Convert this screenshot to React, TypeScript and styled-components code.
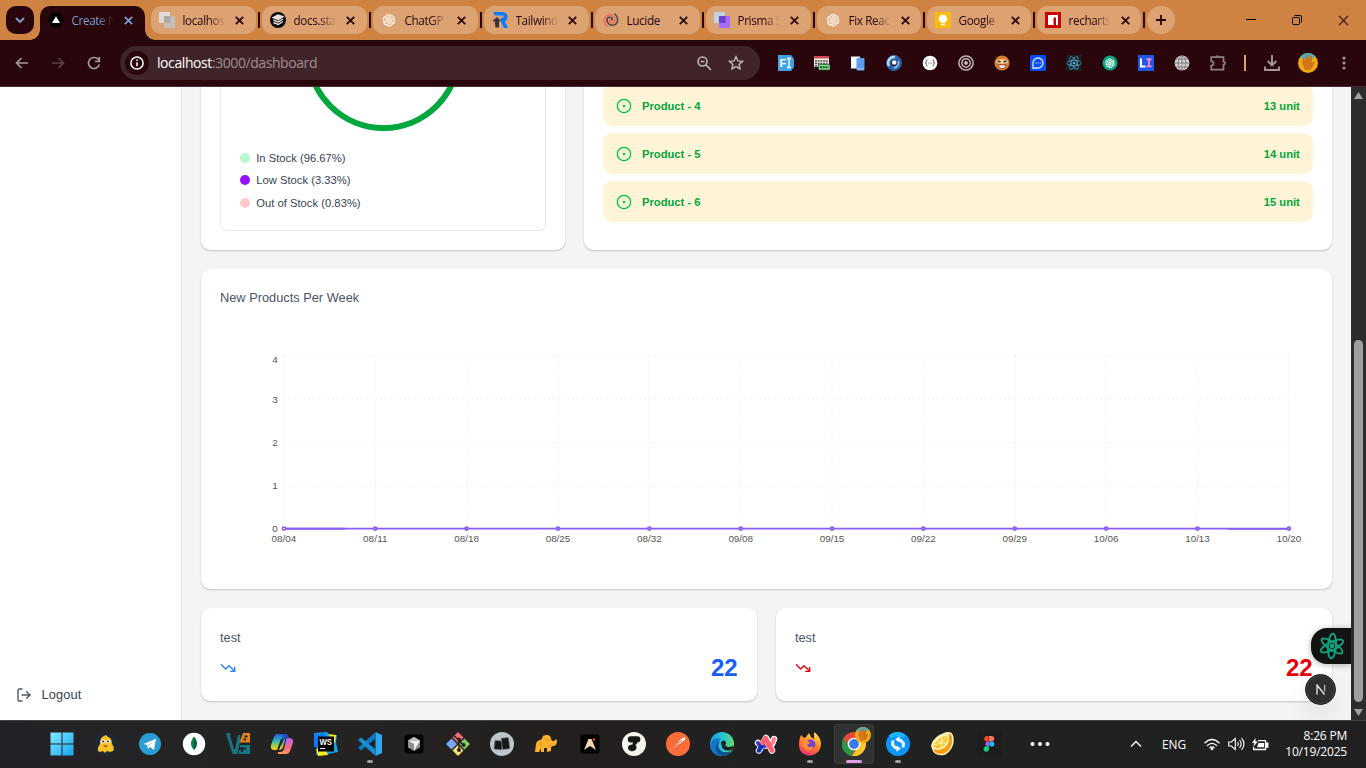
import React from 'react';
import styled, { createGlobalStyle, css } from 'styled-components';
import { CircleDot, LogOut, TrendingDown } from 'lucide-react';
import { AiOutlineOpenAI } from 'react-icons/ai';
import { FaReact } from 'react-icons/fa';

const GlobalStyle = createGlobalStyle`
  * { box-sizing: border-box; }
  body { margin: 0; overflow: hidden; }
  svg { display: block; flex: none; }
`;

const uiFont = `'Open Sans', 'Noto Sans', sans-serif`;

const Screen = styled.div`
  width: 1366px;
  height: 768px;
  display: flex;
  flex-direction: column;
  overflow: hidden;
  font-family: 'Liberation Sans', Arial, sans-serif;
`;

/* ---------- browser tabs ---------- */

const TabStrip = styled.div`
  height: 40px;
  flex: none;
  display: flex;
  padding: 6px 0 0 6px;
  background: #cf8343;
  font-family: ${uiFont};
  color: #28060b;
`;

const TabSearch = styled.div`
  width: 28px;
  height: 28px;
  margin-right: 6px;
  border-radius: 10px;
  background: #28060b;
  display: grid;
  place-items: center;
`;

const Tab = styled.div<{ $active?: boolean; $width: number }>`
  position: relative;
  width: ${(p) => p.$width}px;
  height: ${(p) => (p.$active ? 34 : 28)}px;
  padding: 0 11px 0 8px;
  display: flex;
  align-items: ${(p) => (p.$active ? 'flex-start' : 'center')};
  border-radius: ${(p) => (p.$active ? '10px 10px 0 0' : '10px')};
  background: ${(p) => (p.$active ? '#28060b' : '#dca272')};
  color: ${(p) => (p.$active ? '#7c9fd0' : '#28060b')};
  ${(p) =>
    p.$active &&
    css`
      padding-top: 6px;
      margin-right: 6px;
      &::before, &::after {
        content: '';
        position: absolute;
        bottom: 0;
        width: 10px;
        height: 10px;
      }
      &::before {
        left: -10px;
        background: radial-gradient(circle at 0 0, transparent 9.5px, #28060b 10px);
      }
      &::after {
        right: -10px;
        background: radial-gradient(circle at 100% 0, transparent 9.5px, #28060b 10px);
      }
    `}
`;

const TabTitle = styled.span<{ $fade: boolean }>`
  width: 46px;
  margin: 0 6px 0 7.500px;
  overflow: hidden;
  white-space: nowrap;
  font-size: 11.700px;
  line-height: 16px;
  letter-spacing: -0.350px;
  ${(p) => p.$fade && css`mask-image: linear-gradient(90deg, #000 26px, transparent 42px);`}
`;

const TabDivider = styled.div`
  width: 2px;
  height: 16px;
  margin: 6px 2px 0;
  background: #28060b;
`;

const NewTab = styled.div`
  width: 28px;
  height: 28px;
  border-radius: 14px;
  background: #dca272;
  display: grid;
  place-items: center;
`;

const WindowButtons = styled.div`
  margin-left: auto;
  display: flex;
  height: 28px;
  & > div { width: 46px; display: grid; place-items: center; }
`;

const CloseGlyph = ({ size = 9, width = 1.8 }: { size?: number; width?: number }) => (
  <svg width={size} height={size} viewBox="0 0 9 9" fill="none" stroke="currentColor" strokeWidth={width}>
    <path d="M.8.8l7.4 7.4M8.2.8L.8 8.2" />
  </svg>
);

const TriangleFavicon = () => (
  <svg width="16" height="16"><circle cx="8" cy="8" r="7.6" fill="#000" /><path d="M8 4.2l4 6.8H4z" fill="#fff" /></svg>
);
const SquaresFavicon = ({ back, front, mid }: { back: string; front: string; mid: string }) => (
  <svg width="16" height="16"><rect width="11" height="11" rx="1" fill={back} /><rect x="5" y="4" width="11" height="12" rx="1" fill={front} /><rect x="5" y="4" width="6.5" height="7" fill={mid} /></svg>
);
const LayersFavicon = () => (
  <svg width="16" height="16" fill="none" stroke="#e9e2dc" strokeWidth="1.4"><circle cx="8" cy="8" r="8" fill="#080808" stroke="none" /><path d="M3.2 5.7L8 3l5 1.7-4.7 2.8z" fill="#e9e2dc" /><path d="M3.4 8l4.9 1.9L13 7M3.4 10.5l4.9 2 4.6-3" /></svg>
);
const OpenAIFavicon = () => <AiOutlineOpenAI size={16} color="#fff5ea" stroke="#fff5ea" strokeWidth={18} />;
const RFavicon = () => (
  <svg width="16" height="16"><path d="M1 0h9.500q5 .3 5 5 0 3.300-2.700 4.300L16 16h-4.200L8.500 8.500V6h1.600q1.300-.1 1.300-1.300T10 3.500H3z" fill="#0a7bff" /><path d="M0 9.300L5 5l4 4.300H7v6.200H3.500l-.8-6.200z" fill="#393333" /></svg>
);
const LucideFavicon = () => (
  <svg width="16" height="16" viewBox="0 0 24 24" fill="none" strokeWidth="2.300" strokeLinecap="round"><path d="M14 12a4 4 0 0 0-8 0 8 8 0 1 0 16 0 11.970 11.970 0 0 0-4-8.944" stroke="#4a4344" /><path d="M10 12a4 4 0 0 0 8 0 8 8 0 1 0-16 0 11.970 11.970 0 0 0 4.063 9" stroke="#f56565" /></svg>
);
const KeepFavicon = () => (
  <svg width="16" height="16"><rect width="16" height="16" rx="1.500" fill="#fcbc05" /><circle cx="8" cy="6.800" r="4.100" fill="#fff" /><path d="M6 8h4v3H6zM6 11.800h4v1.400H6z" fill="#fff" /></svg>
);
const NpmFavicon = () => (
  <svg width="16" height="16"><path d="M0 0h16v16H0z" fill="#cb0000" /><path d="M3 3h10v10h-2V5.500H8.500V13H3z" fill="#fff" /></svg>
);

const tabs: { title: string; icon: React.ReactNode; width: number; fade: boolean }[] = [
  { title: 'localhos', icon: <SquaresFavicon back="#dfdad5" front="#c4bebb" mid="#adaaa8" />, width: 105, fade: true },
  { title: 'docs.sta', icon: <LayersFavicon />, width: 105, fade: true },
  { title: 'ChatGP', icon: <OpenAIFavicon />, width: 105, fade: true },
  { title: 'Tailwind', icon: <RFavicon />, width: 105, fade: true },
  { title: 'Lucide', icon: <LucideFavicon />, width: 105, fade: false },
  { title: 'Prisma S', icon: <SquaresFavicon back="#c2d3df" front="#a66cf2" mid="#6d3fce" />, width: 105, fade: true },
  { title: 'Fix Reac', icon: <OpenAIFavicon />, width: 104, fade: true },
  { title: 'Google', icon: <KeepFavicon />, width: 104, fade: true },
  { title: 'recharts', icon: <NpmFavicon />, width: 104, fade: true },
];

/* ---------- browser toolbar ---------- */

const Toolbar = styled.div`
  height: 47px;
  flex: none;
  display: flex;
  align-items: center;
  padding: 0 4px;
  background: #28060b;
  border-bottom: 1px solid #4a2a2e;
  color: #a7999a;
`;

const ToolCell = styled.div<{ $width?: number; $dim?: boolean }>`
  width: ${(p) => p.$width ?? 36}px;
  height: 34px;
  display: grid;
  place-items: center;
  opacity: ${(p) => (p.$dim ? 0.4 : 1)};
`;

const AddressBar = styled.div`
  width: 640px;
  height: 34px;
  margin: 0 8px;
  padding: 0 8px 0 5px;
  display: flex;
  align-items: center;
  border-radius: 17px;
  background: #3f2529;
  color: #c2b8b9;
`;

const SiteInfo = styled.div`
  width: 24px;
  height: 24px;
  border-radius: 12px;
  background: #28060b;
  color: #fff;
  display: grid;
  place-items: center;
`;

const Url = styled.div`
  flex: 1;
  margin-left: 8px;
  font: 14px/20px ${uiFont};
  letter-spacing: -0.420px;
  color: #a08f91;
  & > b { font-weight: 400; color: #fff; }
`;

const ToolSeparator = styled.div`
  width: 2px;
  height: 16px;
  background: #dca272;
`;

const extensionIcons: React.ReactNode[] = [
  <svg width="16" height="16"><path d="M0 0h13l3 4v8l-3 4H0z" fill="#41a3e3" /><text x="1.500" y="12" fontSize="11" fontWeight="700" fontFamily="Liberation Sans" fill="#fff">F</text><path d="M9 3.500h4M11 3.500v9M9 12.500h4" stroke="#fff" strokeWidth="1.300" /></svg>,
  <svg width="16" height="16"><path d="M0 1h15v11H0z" fill="#f1eeec" /><path d="M0 1h15v2.500H0z" fill="#ce4858" /><path d="M1 6h13M1 8.500h13M1 11h5" stroke="#55494a" strokeDasharray="2 .7" strokeWidth="1.500" /><path d="M4.500 9.500H16V15H4.500z" fill="#8be394" stroke="#174a26" strokeWidth=".7" /><path d="M6 12.200h8.500" stroke="#174a26" strokeDasharray="2 .7" strokeWidth="2" /></svg>,
  <svg width="16" height="16"><path d="M1 1.500h9v12H1z" fill="#f5f7fa" /><rect x="6.500" y="3" width="8" height="12.500" rx="1" fill="#5c9df0" /><path d="M7 14h7" stroke="#a8cbff" /></svg>,
  <svg width="16" height="16" fill="none"><circle cx="8" cy="8" r="5.400" stroke="#2865ac" strokeWidth="5" /><path d="M3 11A6 6 0 0 1 9 2" stroke="#b7d8ef" strokeWidth="2.500" /><path d="M12.500 6A6 6 0 0 1 8 13" stroke="#76b3df" strokeWidth="2" /><circle cx="8.200" cy="7.500" r="2.300" fill="#f3f7fb" /></svg>,
  <svg width="16" height="16"><circle cx="8" cy="8" r="7.300" fill="#fff" /><path d="M5.500 5q-1.500 0-1.200 1.500T3.300 8q1.200.2 1 1.500T5.500 11M10.500 5q1.500 0 1.200 1.500t1 1.500q-1.200.2-1 1.500t-1.200 1.500" fill="none" stroke="#555" /><path d="M6.200 8h3.800" stroke="#777" strokeWidth="1.200" strokeDasharray=".9 .5" /></svg>,
  <svg width="16" height="16" fill="none" stroke="#c5babb" strokeWidth="1.500"><circle cx="8" cy="8" r="7.100" /><circle cx="8" cy="8" r="4.200" /><circle cx="8" cy="8" r="1.200" fill="#c5babb" /></svg>,
  <svg width="16" height="16"><circle cx="8" cy="8" r="7.600" fill="#d27c32" /><path d="M2 6q6-4 12 0v2q-6 1.500-12 0z" fill="#f2d3a2" /><path d="M3.500 6.500h3M9.500 6.500h3" stroke="#4b210c" strokeWidth="1.700" /><path d="M4 10h8q-1 3.500-4 3.500T4 10z" fill="#fff" stroke="#6d290e" strokeWidth=".7" /></svg>,
  <svg width="16" height="16" fill="none"><rect width="16" height="16" rx="1.500" fill="#0a4ef0" /><path d="M3 13.200V8a5 5 0 1 1 5 5z" stroke="#dbe8ff" strokeWidth="1.300" /><path d="M5.300 8h6" stroke="#dbe8ff" strokeWidth="1.200" strokeDasharray="1.200 1" /></svg>,
  <svg width="16" height="16"><path d="M0 0h16v16H0z" fill="#1c1c22" /><FaReact x="0.500" y="0.500" size={15} color="#51b8e0" /></svg>,
  <svg width="16" height="16"><circle cx="8" cy="8" r="7.500" fill="#10a37f" /><AiOutlineOpenAI x="2" y="2" size={12} color="#fff" stroke="#fff" strokeWidth={20} /></svg>,
  <svg width="16" height="16"><path d="M0 0h16v16H0z" fill="#2158e8" /><path d="M3 3.500v8h4.500" fill="none" stroke="#fff" strokeWidth="2" /><path d="M8.500 4.200h5M8.500 11.400h5M11 4v8" stroke="#ef86cf" strokeWidth="1.900" /></svg>,
  <svg width="16" height="16" fill="none" stroke="#6f6869" strokeWidth=".8"><circle cx="8" cy="8" r="7.400" fill="#d6d2d2" stroke="none" /><path d="M8 .5v15M.5 8h15M2 4h12M2 12h12" /><ellipse cx="8" cy="8" rx="3.800" ry="7.300" /></svg>,
  <svg width="18" height="18" fill="none" stroke="#8d8183" strokeWidth="1.700"><path d="M2.200 3.200h12.300v4.500q1.700.3 1.700 1.500t-1.700 1.500v5H2.200v-4q2.300-.3 2.300-2.200T2.200 7.200z" /><path d="M6.500 2.800q.3-1.600 1.900-1.600t1.900 1.600" fill="#8d8183" stroke="none" /></svg>,
];

const HandAvatar = ({ size = 20 }: { size?: number }) => (
  <svg width={size} height={size} viewBox="0 0 20 20"><circle cx="10" cy="10" r="10" fill="#f2a80f" /><path d="M2.200 4Q9-3.500 17 3L14 6H5z" fill="#3fb5cf" /><path d="M4.500 11V6l1.500-.5L7.200 9V2.500h1.500L9.500 7V1.500h1.700V7l1.300-4.500 1.300.4V10l2.200-1.500.8.800-2.300 5-2.500 2.500H7z" fill="#cf7219" /><path d="M8 9v6M11 8v7" stroke="#e58c28" strokeWidth=".7" /></svg>
);

/* ---------- page ---------- */

const Page = styled.div`
  height: 633px;
  flex: none;
  display: flex;
`;

const Sidebar = styled.aside`
  width: 182px;
  display: flex;
  flex-direction: column;
  justify-content: flex-end;
  padding: 0 16px 16px;
  background: #fff;
  border-right: 1px solid #e5e7eb;
`;

const LogoutLink = styled.div`
  display: flex;
  align-items: center;
  gap: 9.600px;
  height: 19px;
  font-size: 12.800px;
  color: #364153;
  letter-spacing: 0.1px;
  & svg { color: #4a5565; }
`;

const Main = styled.main`
  position: relative;
  width: 1169px;
  padding: 0 19.200px 19.200px;
  display: flex;
  flex-direction: column;
  justify-content: flex-end;
  gap: 19.200px;
  overflow: hidden;
  background: #f3f4f6;
`;

const CardGrid = styled.div<{ $columns: string }>`
  display: grid;
  flex: none;
  grid-template-columns: ${(p) => p.$columns};
  gap: 19.200px;
`;

const Card = styled.section<{ $height: number }>`
  height: ${(p) => p.$height}px;
  flex: none;
  padding: 19.200px 19.200px 18.800px 18.800px;
  display: flex;
  flex-direction: column;
  border-radius: 9.600px;
  background: #fff;
  box-shadow: 0 1px 2.400px rgba(0, 0, 0, 0.1), 0 1px 1.600px -0.800px rgba(0, 0, 0, 0.1);
`;

const StatCard = styled(Card)`
  padding-top: 20px;
`;

const CardTitle = styled.h3`
  margin: 0;
  font-size: 12.800px;
  line-height: 19.200px;
  font-weight: 400;
  color: #4a5565;
`;

const StockPanel = styled.div`
  flex: 1;
  display: flex;
  flex-direction: column;
  align-items: center;
  justify-content: flex-end;
  padding: 19px;
  border: 1px solid #e5e7eb;
  border-radius: 6.400px;
`;

const Legend = styled.ul`
  align-self: stretch;
  list-style: none;
  margin: 19px 0 0;
  padding: 0;
  display: flex;
  flex-direction: column;
  gap: 6.400px;
`;

const LegendItem = styled.li<{ $color: string }>`
  display: flex;
  align-items: center;
  gap: 6.200px;
  height: 16px;
  font-size: 11.200px;
  letter-spacing: 0.030px;
  color: #364153;
  &::before {
    content: '';
    width: 10px;
    height: 10px;
    border-radius: 5px;
    background: ${(p) => p.$color};
  }
`;

const ProductList = styled(Card)`
  justify-content: flex-end;
  gap: 7px;
  padding-bottom: 27.500px;
`;

const ProductRow = styled.div`
  height: 41px;
  flex: none;
  display: flex;
  align-items: center;
  gap: 9.600px;
  padding: 0 12.800px 0 13.200px;
  border-radius: 9.600px;
  background: #fff4d6;
  color: #00a63e;
  font-size: 11.200px;
  font-weight: 700;
  & > span:last-child { margin-left: auto; }
`;

const StatLine = styled.div<{ $color: string }>`
  display: flex;
  align-items: center;
  justify-content: space-between;
  flex: none;
  height: 41px;
  font-size: 24px;
  font-weight: 700;
  color: ${(p) => p.$color};
`;

const AssistantTab = styled.div`
  position: absolute;
  right: 0;
  top: 541px;
  width: 40px;
  height: 36px;
  padding-left: 2px;
  display: grid;
  place-items: center;
  border-radius: 16px 0 0 16px;
  background: #131313;
  box-shadow: 0 1px 6px rgba(0, 0, 0, 0.3);
`;

const DevBadge = styled.div`
  position: absolute;
  right: 15px;
  top: 587px;
  width: 31px;
  height: 31px;
  display: grid;
  place-items: center;
  border-radius: 50%;
  background: #2f2f2f;
  border: 1px solid #171717;
  box-shadow: inset 0 0 0 1px #484848, 0 13px 26px rgba(0, 0, 0, 0.08);
`;

const Scrollbar = styled.div`
  width: 15px;
  display: flex;
  flex-direction: column;
  justify-content: space-between;
  align-items: center;
  padding: 5px 0 4px;
  background: #2c2c2c;
`;

const ScrollThumb = styled.div`
  width: 9px;
  height: 362px;
  margin: auto 0 7px;
  border-radius: 4.500px;
  background: #9f9f9f;
`;

const weeks = ['08/04', '08/11', '08/18', '08/25', '08/32', '09/08', '09/15', '09/22', '09/29', '10/06', '10/13', '10/20'];

const WeekChart = () => {
  const left = 63.900;
  const step = 91.360;
  const top = 28.800;
  const rowStep = 43.200;
  const bottom = top + 4 * rowStep;
  const right = left + 11 * step;
  return (
    <svg width="1093" height="240" fontFamily="Liberation Sans, Arial, sans-serif" fontSize="9.900" fill="#555">
      <g stroke="#f2f2f2" strokeDasharray="2.400 2.400">
        {[0, 1, 2, 3, 4].map((i) => <path key={i} d={`M${left} ${top + i * rowStep}H${right}`} />)}
        {weeks.map((w, i) => <path key={w} d={`M${left + i * step} ${top}V${bottom}`} />)}
      </g>
      {[4, 3, 2, 1, 0].map((n, i) => (
        <text key={n} x="57.800" y={(i === 0 ? top + 3.500 : top + i * rowStep) + 3.800} textAnchor="end">{n}</text>
      ))}
      {weeks.map((w, i) => (
        <text key={w} x={left + i * step} y="214.600" textAnchor="middle" textLength="24.600">{w}</text>
      ))}
      <path d={`M${left} ${bottom + 0.200}h61M${right - 61} ${bottom + 0.300}h61`} stroke="#8b5cf6" strokeWidth="1.900" />
      <path d={`M${left} ${bottom}H${right}`} stroke="#8b5cf6" strokeWidth="1.600" />
      {weeks.map((w, i) => (
        <circle key={w} cx={left + i * step} cy={bottom} r="1.600" fill={i === 0 ? '#fff' : '#a98bf8'} stroke="#8b5cf6" strokeWidth="1.600" />
      ))}
    </svg>
  );
};

/* ---------- taskbar ---------- */

const Taskbar = styled.footer`
  height: 48px;
  flex: none;
  display: flex;
  align-items: center;
  padding: 0 0 1px 39.500px;
  border-top: 1px solid #424143;
  background: linear-gradient(90deg, #242126 0%, #242425 12%, #241f1f 45%, #202222 55%, #202020 100%);
  color: #fff;
  font-family: ${uiFont};
`;

const TaskItem = styled.div<{ $active?: boolean; $running?: boolean }>`
  position: relative;
  width: 40px;
  height: 40px;
  margin: 0 2px;
  display: grid;
  place-items: center;
  border-radius: 4px;
  background: ${(p) => (p.$active ? '#303131' : 'transparent')};
  ${(p) => p.$active && css`box-shadow: inset 0 0 0 1px #3a3a3a;`}
  &::after {
    content: '';
    display: ${(p) => (p.$active || p.$running ? 'block' : 'none')};
    position: absolute;
    bottom: 1px;
    width: ${(p) => (p.$active ? 16 : 6)}px;
    height: 3px;
    border-radius: 2px;
    background: ${(p) => (p.$active ? '#dda0e5' : '#9b9b9b')};
  }
`;

const ProfileBadge = styled.div`
  position: absolute;
  right: 3px;
  top: 3px;
`;

const TrayItem = styled.div<{ $width: number }>`
  width: ${(p) => p.$width}px;
  display: grid;
  place-items: center;
  font-size: 11.900px;
  letter-spacing: -0.1px;
`;

const Spacer = styled.div<{ $width?: number }>`
  ${(p) => (p.$width ? `width: ${p.$width}px;` : 'flex: 1;')}
`;

const Clock = styled.div`
  width: 71px;
  text-align: right;
  font-size: 12px;
  line-height: 16px;
  letter-spacing: -0.200px;
`;

type Task = { icon: React.ReactNode; state?: 'active' | 'running' };

const tasks: Task[] = [
  { icon: <svg width="24" height="24"><defs><linearGradient id="win" x2="1" y2="1"><stop stopColor="#80ebff" /><stop offset="1" stopColor="#17a5f5" /></linearGradient></defs><path d="M.5.500h11v11H.5zM12.500.5h11v11h-11zM.5 12.500h11v11H.5zM12.500 12.500h11v11h-11z" fill="url(#win)" /></svg> },
  { icon: <svg width="24" height="24"><circle cx="12" cy="12" r="11.500" fill="#1e2836" /><path d="M4 19q-1-3 2-7 0-7 4-8l2-1 2 2q4 1 4 7 3 4 1 7l-3 1-3-1-2 2-2-2-3 1z" fill="#f7c325" /><circle cx="8.800" cy="9.500" r="2.100" fill="#fff" /><circle cx="14" cy="9.500" r="2.100" fill="#fff" /><circle cx="9" cy="9.500" r="1" fill="#222" /><circle cx="14" cy="9.500" r="1" fill="#222" /><path d="M9 13.500h5q-2.500 3-5 0" fill="#a53926" /></svg> },
  { icon: <svg width="24" height="24"><circle cx="12" cy="12" r="11" fill="#2b9dd4" /><path d="M5.500 12L18 6.800 16 18l-4-3-2 2-.8-4z" fill="#fff" /><path d="M9.300 13.200L16 8.500 11 14" fill="#a9cde3" /></svg> },
  { icon: <svg width="24" height="24"><circle cx="12" cy="12" r="11.200" fill="#fff" /><path d="M12 4.500q-4 5-2.800 9 1 3 2.600 4.200L12 20z" fill="#13804d" /><path d="M12 4.500q4 5 2.800 9-1 3-2.600 4.200L12 20z" fill="#075f38" /></svg> },
  { icon: <svg width="24" height="24"><path d="M0 1h4l4.500 16L10 12l2-9h2.500L14 11l-1 3-1.500 8H6.500z" fill="#167580" /><path d="M4.500 4L8.500 17l1-5" fill="none" stroke="#242326" strokeWidth="1" /><path d="M14.500 8L17 1h7v9.500H13.500z" fill="#e48421" /><path d="M17.500 6.500h2.500v2h-2.500zM18.500 3.500h3v2h-3z" fill="#242326" /><path d="M14 13h10v9H13v-4h2v2h2v-2.500h3V15.500h-6z" fill="#167580" /></svg> },
  { icon: <svg width="24" height="24"><defs><linearGradient id="copA" x2="0" y2="1"><stop stopColor="#245dde" /><stop offset=".4" stopColor="#29b1c5" /><stop offset=".75" stopColor="#a8cf42" /><stop offset="1" stopColor="#f8c52a" /></linearGradient><linearGradient id="copB" x2="0" y2="1"><stop stopColor="#b763ed" /><stop offset=".6" stopColor="#f46a85" /><stop offset="1" stopColor="#ff9d50" /></linearGradient></defs><path d="M7 2h8q2 0 1 3l-3 10q-1 3-4 3H4q-4 0-3-5L4 5q1-3 3-3z" fill="url(#copA)" /><path d="M17 6h2q5 0 4 5l-3 8q-1 3-4 3H9q-2 0-1-2h3q2 0 3-3l2-9z" fill="url(#copB)" /><path d="M13 2h3q2 0 3 4h-2q-3 0-4 4l-2 5z" fill="#264cb9" /><path d="M11 7l2 0-4 11H7z" fill="#241f24" /></svg> },
  { icon: <svg width="24" height="24"><path d="M0 1l13-1 3 4 7-1-1 7 2 10-10 2-12 1 1-7z" fill="#10a5e9" /><path d="M14 2l8 1-1 8zM2 17l9-2 3 8-10 1z" fill="#f6ed21" /><path d="M0 2l12-1-7 15-5-1z" fill="#087cf7" /><path d="M4 4.500h16v15H4z" fill="#000" /><text x="5.500" y="12.500" fontFamily="Liberation Sans" fontWeight="700" fontSize="8.500" textLength="12.500" lengthAdjust="spacingAndGlyphs" fill="#fff">WS</text><path d="M6 16.500h5" stroke="#fff" /></svg> },
  { state: 'running', icon: <svg width="24" height="24"><path d="M17.500 0L24 3v18l-6.500 3z" fill="#2fa8ed" /><path d="M17.500 0v6.500L3 18.500 0 15.700z" fill="#087abf" /><path d="M17.500 24v-6.500L3 5.500.2 8z" fill="#168fd5" /></svg> },
  { icon: <svg width="24" height="24"><rect x="2.500" y="2.500" width="19" height="19" rx="3.500" fill="#000" /><path d="M12 5l6 3.500v7L12 19l-6-3.500v-7z" fill="#8e8e8e" /><path d="M6 8.500h12L12 19v-7z" fill="#efefef" /><path d="M12 5l6 3.500H6z" fill="#c2c2c2" /></svg> },
  { icon: <svg width="24" height="24"><path d="M12 0l5.500 5.500L12 11 6.500 5.500z" fill="#f06d79" /><path d="M5.500 6.500L11 12l-5.500 5.500L0 12z" fill="#79aafa" /><path d="M18.500 6.500L24 12l-5.500 5.500L13 12z" fill="#83ce5f" /><path d="M12 13l5.500 5.500L12 24l-5.500-5.500z" fill="#f5df74" /><path d="M7 3l6 5v10M13 8l4 5" fill="none" stroke="#2a2222" strokeWidth="1.500" /><g fill="#2a2222"><circle cx="13" cy="7.500" r="1.900" /><circle cx="13" cy="18" r="2" /><circle cx="17.500" cy="13" r="2" /></g></svg> },
  { icon: <svg width="24" height="24"><circle cx="12" cy="12" r="12" fill="#bcc6cc" /><g fill="#171717" stroke="#7d878c" strokeWidth=".8"><rect x="4.500" y="8.500" width="8" height="9" rx="1" transform="rotate(7 8 12)" /><rect x="11.800" y="5.800" width="7.500" height="11.500" rx="1" transform="rotate(-7 15 12)" /></g></svg> },
  { icon: <svg width="24" height="24"><path d="M1 20l1-8q1-4 5-4l2-4q4-2 7 0l2 5h2l2-2 1 2q0 5-4 5l-2 1v4l-4 1v-4h-3v4H7v-4l-2 4z" fill="#ffb32d" /><path d="M9 5q4 5 8 2M6 10l2 5M13 15l4-2" stroke="#e78b19" fill="none" /></svg> },
  { icon: <svg width="24" height="24"><rect x="2.500" y="2.500" width="19" height="19" rx="2" fill="#000" /><path d="M10.500 7h3l4.500 11-6-4-6 4z" fill="#f3d7ae" /><circle cx="16" cy="7.500" r="1.300" fill="#e4512b" /></svg> },
  { icon: <svg width="24" height="24"><circle cx="12" cy="12" r="12" fill="#f5f5ef" /><rect x="5.800" y="4.300" width="12.500" height="6.200" rx="3" fill="#171714" /><path d="M11 10h4.500q-.3 2-2 3 2 2.500.2 4.800-2 2-5 1.200-3.200-1.200-2.700-4 .7-2.300 4.500-2.600z" fill="#171714" /></svg> },
  { icon: <svg width="24" height="24"><circle cx="12" cy="12" r="12" fill="#ff6c37" /><path d="M5 19l10-12 4-2q1 3-2 4z" fill="#fff" /><path d="M6 18L16 8M9 17l6-5" stroke="#d65027" strokeWidth=".8" /></svg> },
  { icon: <svg width="24" height="24"><defs><linearGradient id="edge" x2="1"><stop stopColor="#199ce5" /><stop offset=".6" stopColor="#2bc7cb" /><stop offset="1" stopColor="#66dc62" /></linearGradient></defs><circle cx="12" cy="12" r="12" fill="url(#edge)" /><path d="M0 13Q3 5 11 7q-4 3-3 8 2 7 12 5-4 5-10 4-10-2-10-11z" fill="#1374c5" /><path d="M10 9q-5 7 3 11 4 1 8-1-3 5-8 5Q3 21 7 12z" fill="#0c4e8e" /><path d="M11 10q3-3 5 0 .5 2-1 3.500 2 2.500 8 .5l1 1-2 3q-8 2-10-3z" fill="#202222" /></svg> },
  { icon: <svg width="24" height="24" fill="none" strokeLinecap="round" strokeLinejoin="round"><path d="M5 18.500L12 6l6 12.500M4 11q6 5 14 1l2-5" stroke="#fff" strokeWidth="6.500" /><path d="M4 11q2 3.500 8 3.500 6.500-.5 8-7.500" stroke="#ff7f8e" strokeWidth="4" /><path d="M4 11q2 3.300 6 3.500" stroke="#3441db" strokeWidth="4" /><path d="M5 18.500l4-7.500" stroke="#0c2db5" strokeWidth="4.500" /><path d="M8.500 11l3-5 6.500 12.500" stroke="#ff606d" strokeWidth="4.800" /></svg> },
  { state: 'running', icon: <svg width="24" height="24"><defs><linearGradient id="fox" x1=".7" x2=".3" y2="1"><stop stopColor="#ffe14a" /><stop offset=".5" stopColor="#ff8429" /><stop offset="1" stopColor="#f52f73" /></linearGradient></defs><path d="M3 3l3 3 2-1 3-4 2 4 3 2V0q6 4 7 11 0 11-11 12.500Q1 23 1 12 1 7 3 3z" fill="url(#fox)" /><circle cx="12.500" cy="12.500" r="5" fill="#7746cf" /><path d="M5 8l5 1 2 2-3 2q2 4 7 1-3 7-8 4-5-3-3-10z" fill="#ff8f2d" /></svg> },
  { state: 'active', icon: <><svg width="24" height="24"><circle cx="12" cy="12" r="12" fill="#e7473b" /><path d="M1.600 6L7 15.500 12 18l-2 6A12 12 0 0 1 1.600 6z" fill="#279948" /><path d="M24 12a12 12 0 0 1-14 12l7-10V7h6q1 2 1 5z" fill="#fac72d" /><circle cx="12" cy="12" r="6.300" fill="#fff" /><circle cx="12" cy="12" r="4.900" fill="#367be8" /></svg><ProfileBadge><HandAvatar size={16} /></ProfileBadge></> },
  { state: 'running', icon: <svg width="24" height="24" fill="none"><circle cx="12" cy="12" r="12" fill="#0a95fa" /><path d="M4 5q7-6 14-.5" stroke="#19b7ff" strokeWidth="4" /><path d="M12 7.500l3 1 2.500 3-.5 4M12 16.500l-3-1-2.500-3 .5-4" stroke="#eaf7ff" strokeWidth="3" /><path d="M9 7.500L13.500 4v6.500zM15 16.500L10.500 20v-6.500z" fill="#eaf7ff" /></svg> },
  { icon: <svg width="26" height="26"><path d="M3 14Q5 6 17 2q7-2 7 7 0 9-8 14Q4 26 3 14z" fill="#f89c12" stroke="#fff1ba" strokeWidth="1.500" /><path d="M3 15Q7 6 19 3q2 12-8 15-5 1-8-3z" fill="#ffc72e" stroke="#fff7cd" strokeWidth="1.300" /><path d="M5 14l7-2 6-8M8 9l4 3 0 5M13 5l-1 7 6 0" stroke="#fff3ae" strokeWidth="1" fill="none" /></svg> },
];

export default function App() {
  return (
    <Screen>
      <GlobalStyle />
      <TabStrip>
        <TabSearch>
          <svg width="10" height="8" fill="none" stroke="#7c9fd0" strokeWidth="1.900"><path d="M1 2l4 4 4-4" /></svg>
        </TabSearch>
        <Tab $active $width={105}>
          <TriangleFavicon />
          <TabTitle $fade>Create N</TabTitle>
          <div style={{ paddingTop: 4 }}><CloseGlyph /></div>
        </Tab>
        {tabs.map((tab) => (
          <React.Fragment key={tab.title}>
            <Tab $width={tab.width}>
              {tab.icon}
              <TabTitle $fade={tab.fade}>{tab.title}</TabTitle>
              <CloseGlyph />
            </Tab>
            <TabDivider />
          </React.Fragment>
        ))}
        <NewTab>
          <svg width="10" height="10" stroke="currentColor" strokeWidth="1.800"><path d="M5 0v10M0 5h10" /></svg>
        </NewTab>
        <WindowButtons>
          <div><svg width="10" height="10" stroke="#000"><path d="M0 4.500h10" /></svg></div>
          <div><svg width="10" height="10" fill="none" stroke="#000"><rect x=".5" y="2.500" width="7" height="7" rx="1" /><path d="M2.500.5H8q1.500 0 1.500 1.500v5.500" /></svg></div>
          <div><CloseGlyph size={11} width={0.9} /></div>
        </WindowButtons>
      </TabStrip>

      <Toolbar>
        <ToolCell><svg width="14" height="12" fill="none" stroke="currentColor" strokeWidth="1.700"><path d="M13 6H1.500M6.500 1l-5 5 5 5" /></svg></ToolCell>
        <ToolCell $dim><svg width="14" height="12" fill="none" stroke="currentColor" strokeWidth="1.700"><path d="M1 6h11.500M7.500 1l5 5-5 5" /></svg></ToolCell>
        <ToolCell><svg width="14" height="14" fill="none" stroke="currentColor" strokeWidth="1.700"><path d="M12.300 8.500A5.500 5.500 0 1 1 11 3.200L12 4.500M12.300 1v4.500H8" /></svg></ToolCell>
        <AddressBar>
          <SiteInfo>
            <svg width="14" height="14" fill="none" stroke="currentColor" strokeWidth="1.500"><circle cx="7" cy="7" r="6.100" /><path d="M7 6.300v4M7 3.500V5" /></svg>
          </SiteInfo>
          <Url><b>localhost</b>:3000/dashboard</Url>
          <ToolCell $width={32}><svg width="15" height="15" fill="none" stroke="currentColor" strokeWidth="1.600"><circle cx="5.500" cy="5.500" r="4.500" /><path d="M8.800 8.800l5.200 5.200M3.500 5.500h4" /></svg></ToolCell>
          <ToolCell $width={32}><svg width="16" height="16" fill="none" stroke="currentColor" strokeWidth="1.400"><path d="M8 1.800l1.900 4.100 4.500.5-3.300 3 .9 4.400L8 11.600l-4 2.200.9-4.400-3.300-3 4.500-.5z" /></svg></ToolCell>
        </AddressBar>
        {extensionIcons.map((icon, i) => <ToolCell key={i}>{icon}</ToolCell>)}
        <ToolCell $width={18}><ToolSeparator /></ToolCell>
        <ToolCell><svg width="16" height="16" fill="none" stroke="currentColor" strokeWidth="1.900"><path d="M8 0v10M3.700 6L8 10.300 12.300 6M1 11.500V15h14v-3.500" /></svg></ToolCell>
        <ToolCell><HandAvatar /></ToolCell>
        <ToolCell><svg width="4" height="14" fill="currentColor"><circle cx="2" cy="2" r="1.500" /><circle cx="2" cy="7" r="1.500" /><circle cx="2" cy="12" r="1.500" /></svg></ToolCell>
      </Toolbar>

      <Page>
        <Sidebar>
          <LogoutLink><LogOut size={16} />Logout</LogoutLink>
        </Sidebar>
        <Main>
          <CardGrid $columns="364.070px 1fr">
            <Card $height={320}>
              <StockPanel>
                <svg width="157" height="157" fill="none"><circle cx="78.500" cy="78.500" r="75.400" stroke="#00a63e" strokeWidth="6" /></svg>
                <Legend>
                  <LegendItem $color="#b9f8cf">In Stock (96.67%)</LegendItem>
                  <LegendItem $color="#9810fa">Low Stock (3.33%)</LegendItem>
                  <LegendItem $color="#ffc9c9">Out of Stock (0.83%)</LegendItem>
                </Legend>
              </StockPanel>
            </Card>
            <ProductList $height={320}>
              {[[4, 13], [5, 14], [6, 15]].map(([id, units]) => (
                <ProductRow key={id}>
                  <CircleDot size={16} color="#00c950" />
                  <span>Product - {id}</span>
                  <span>{units} unit</span>
                </ProductRow>
              ))}
            </ProductList>
          </CardGrid>
          <Card $height={320}>
            <CardTitle>New Products Per Week</CardTitle>
            <div style={{ marginTop: 20 }}><WeekChart /></div>
          </Card>
          <CardGrid $columns="1fr 1fr">
            <StatCard $height={92.8}>
              <CardTitle>test</CardTitle>
              <StatLine $color="#155dfc"><TrendingDown size={16} color="#2b7fff" />22</StatLine>
            </StatCard>
            <StatCard $height={92.8}>
              <CardTitle>test</CardTitle>
              <StatLine $color="#e7000b"><TrendingDown size={16} color="#e7000b" />22</StatLine>
            </StatCard>
          </CardGrid>
          <AssistantTab>
            <svg width="26" height="28" viewBox="-13 -14 26 28" fill="none" stroke="#10a37f" strokeWidth="1.800">
              <ellipse rx="4" ry="12.300" transform="rotate(4)" /><ellipse rx="4" ry="12.300" transform="rotate(64)" /><ellipse rx="4" ry="12.300" transform="rotate(124)" />
              <circle r="2.400" fill="#10a37f" stroke="none" />
            </svg>
          </AssistantTab>
          <DevBadge>
            <svg width="10" height="11" fill="none" stroke="#eee" strokeWidth="1.300"><path d="M1 10.500V1l7.500 9.500" /><path d="M8.600.8v6.700" stroke="#bbb" /></svg>
          </DevBadge>
        </Main>
        <Scrollbar>
          <svg width="9" height="7" fill="#9f9f9f"><path d="M4.500 0L9 7H0z" /></svg>
          <ScrollThumb />
          <svg width="9" height="7" fill="#9f9f9f"><path d="M4.500 7L9 0H0z" /></svg>
        </Scrollbar>
      </Page>

      <Taskbar>
        {tasks.map((task, i) => (
          <TaskItem key={i} $active={task.state === 'active'} $running={task.state === 'running'}>{task.icon}</TaskItem>
        ))}
        <TrayItem $width={50}>
          <svg width="24" height="24"><path d="M0 0h24v24H0z" fill="#1c1c1d" /><path d="M11.500 4v5.500H10a2.700 2.700 0 0 1 0-5.500z" fill="#f24e1e" /><path d="M12 4h2.500a2.700 2.700 0 0 1 0 5.500H12z" fill="#ff7262" /><path d="M12 9.500H10a2.700 2.700 0 0 0 0 5h2z" fill="#a259ff" /><circle cx="14.700" cy="12" r="2.600" fill="#1abcfe" /><path d="M12 14.500H10a2.700 2.700 0 1 0 2 3z" fill="#0acf83" /></svg>
        </TrayItem>
        <TrayItem $width={52}>
          <svg width="20" height="6" fill="#fff"><circle cx="2.500" cy="3" r="2" /><circle cx="10" cy="3" r="2" /><circle cx="17.500" cy="3" r="2" /></svg>
        </TrayItem>
        <Spacer />
        <TrayItem $width={32}><svg width="12" height="8" fill="none" stroke="#fff" strokeWidth="1.400"><path d="M1 6.500l5-5 5 5" /></svg></TrayItem>
        <TrayItem $width={44}>ENG</TrayItem>
        <TrayItem $width={32}><svg width="16" height="13" fill="none" stroke="#fff" strokeWidth="1.200"><path d="M.5 5.200q7.500-7.400 15 0M3 7.700q5-4.800 10 0M5.400 10q2.600-2.400 5.200 0" /><circle cx="8" cy="11" r="1.300" fill="#fff" stroke="none" /></svg></TrayItem>
        <TrayItem $width={16}><svg width="17" height="14" fill="none" stroke="#fff" strokeWidth="1.100"><path d="M.7 5v4h2.600l4 3.500v-11l-4 3.500zM9.500 5q1.500 2 0 4M11.500 3q3.300 4 0 8M13.500 1.200q5 5.800 0 11.600" /></svg></TrayItem>
        <TrayItem $width={32}><svg width="17" height="13" fill="none" stroke="#fff" strokeWidth="1.300"><path d="M6 2.700h7.500v8.800H1.700V9M14.500 5.200v4h1.300v-4z" /><path d="M6.500 5H12v4.300H5z" fill="#fff" stroke="none" /><path d="M3.500 0L0 5h2.500L1 9 6 3.500H3.500z" fill="#fff" stroke="none" /></svg></TrayItem>
        <Clock>8:26 PM<br />10/19/2025</Clock>
        <Spacer $width={19} />
      </Taskbar>
    </Screen>
  );
}
